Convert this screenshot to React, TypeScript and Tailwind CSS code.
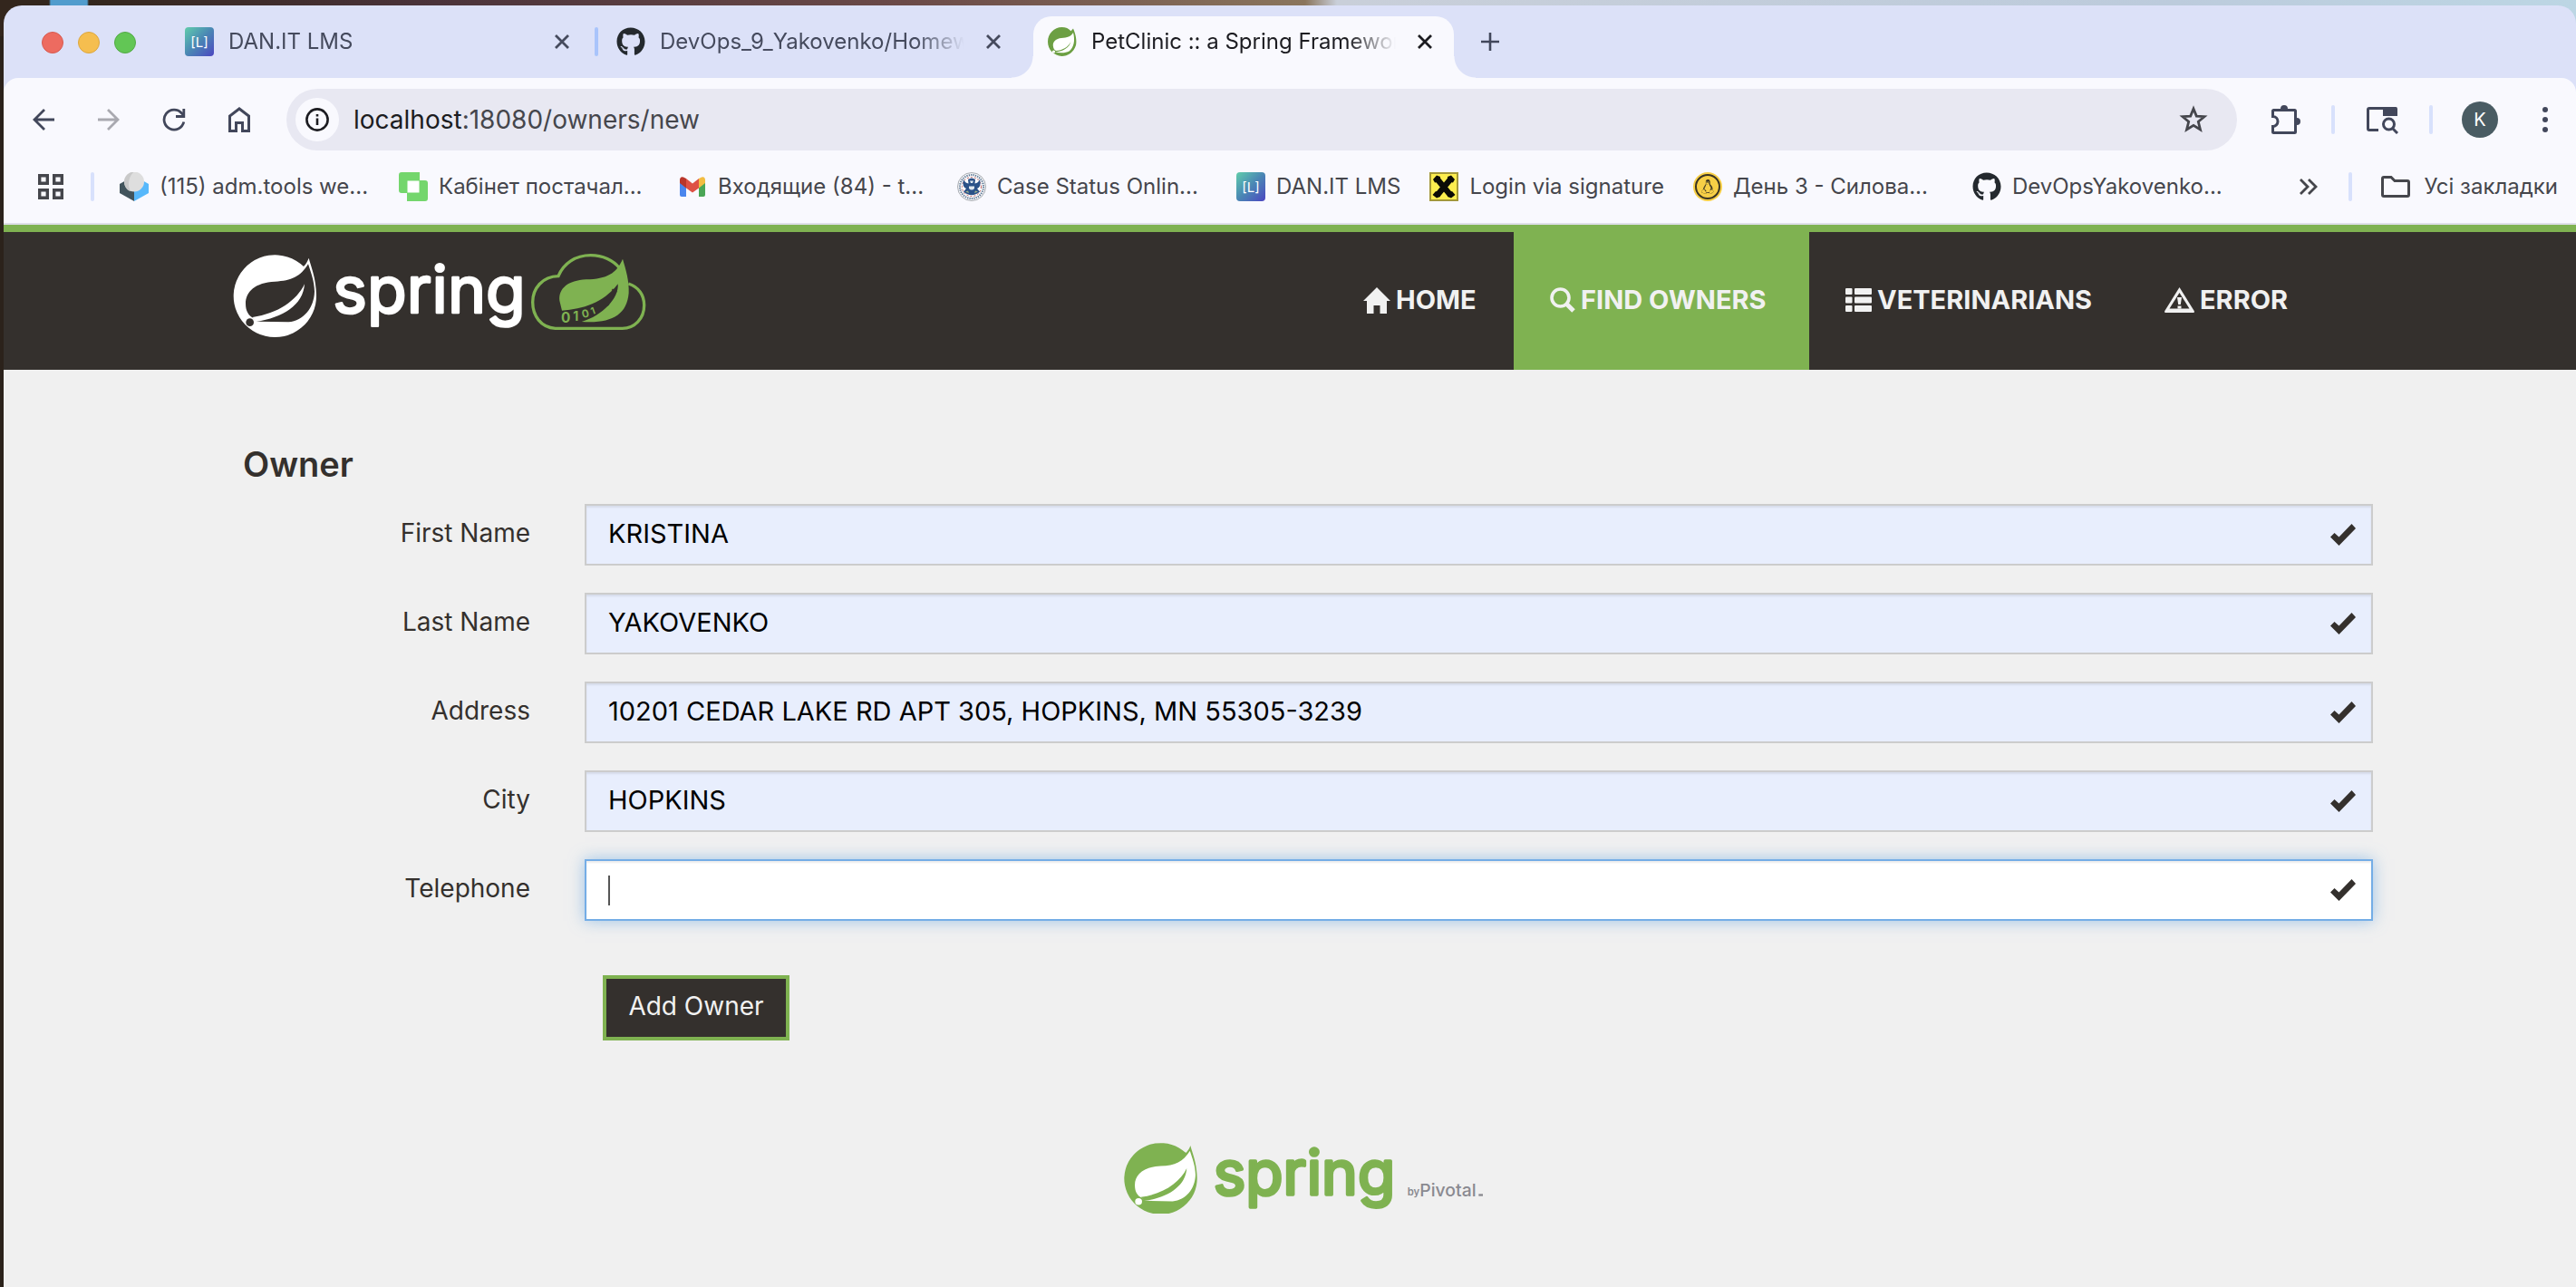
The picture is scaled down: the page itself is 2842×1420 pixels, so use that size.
import React from 'react';
import { FaGithub, FaLinux } from 'react-icons/fa';

/* ---------- browser icons ---------- */

function DanIcon() {
  return (
    <span className="flex size-8 shrink-0 items-center justify-center rounded-sm bg-linear-135 from-[#62cdaa] via-[#4a86b4] to-[#4c43c0] text-[15px] leading-none text-white">
      [L]
    </span>
  );
}

function SpringFavicon() {
  return (
    <svg viewBox="0 0 32 32" className="size-8 shrink-0" aria-hidden="true">
      <path
        d="M28 1.500C31 8 32 15 31 20C28.500 28 22 32 15.500 32C7 31.500 0 25 0 16C0 7 7 0 15.500 0C20 0 23 1.500 25.500 4.200Z"
        fill="#6c9f43"
      />
      <path
        d="M28 6C25.500 10.500 21.500 11.500 15 12C9 12.500 5.500 16 5.800 20.500C6 23.500 7.500 25.500 9 26C16 25.500 22 22.500 25.500 16C23.500 22.500 17.500 26.500 8 27.500C14 28.800 20 28.500 23.500 26.500C28.500 23 30.500 15 28 6Z"
        fill="#fff"
      />
      <circle cx="6.500" cy="27" r="1.600" fill="#fff" />
    </svg>
  );
}

function BoxIcon() {
  return (
    <svg viewBox="0 0 32 32" className="size-8 shrink-0" aria-hidden="true">
      <path d="M0 13L7 9L16 20V32L0 23Z" fill="#42545c" />
      <path d="M32 13L25 9L16 20V32L32 23Z" fill="#57b8fb" />
      <ellipse cx="16" cy="10.500" rx="11" ry="11" fill="#dedede" />
      <path d="M16 -0.500C9 0 5 5 5 11C5.500 17 9 20.500 12 21C8 14 10 4 16 -0.500Z" fill="#c9c9c9" />
    </svg>
  );
}

function CabinetIcon() {
  return (
    <svg viewBox="0 0 32 32" className="size-8 shrink-0" aria-hidden="true">
      <path
        d="M3 0H23V9H29Q32 9 32 12V29Q32 32 29 32H9V23H3Q0 23 0 20V3Q0 0 3 0Z"
        fill="#74d66c"
      />
      <rect x="9.500" y="9.500" width="13" height="13" fill="#fff" />
    </svg>
  );
}

function GmailIcon() {
  return (
    <svg viewBox="0 0 32 32" className="size-8 shrink-0" aria-hidden="true">
      <path d="M2 8L9 13V27H4Q2 27 2 25Z" fill="#4a86ee" />
      <path d="M30 8L23 13V27H28Q30 27 30 25Z" fill="#4ba656" />
      <path d="M23 7L26 5.500Q30 4.500 30 9V12L23 17.500Z" fill="#f3bd42" />
      <path d="M9 7L16 12.500L23 7V17.500L16 22.500L9 17.500Z" fill="#de5145" />
      <path d="M9 7L6 5.500Q2 4.500 2 9V12L9 17.500Z" fill="#b9362b" />
    </svg>
  );
}

function SealIcon() {
  return (
    <svg viewBox="0 0 32 32" className="size-8 shrink-0" aria-hidden="true">
      <circle cx="16" cy="16" r="15.500" fill="#f4f5f7" stroke="#a9adb3" />
      <circle cx="16" cy="16" r="13" fill="none" stroke="#54708f" strokeWidth="2" strokeDasharray="1.200 1.200" />
      <circle cx="16" cy="16" r="10.500" fill="#fff" stroke="#c25b5b" strokeDasharray="2 2" />
      <path
        d="M7 8Q9 12 12.500 12.500L12 8Q16 5 20 8L19.500 12.500Q23 12 25 8Q27 16 22 18L25 21.500Q16 29 7 21.500L10 18Q5 16 7 8Z"
        fill="#2b5288"
      />
      <path d="M14 9.500H18L17 12H15ZM13 15.500H19V18Q16 21 13 18Z" fill="#dfe7ee" />
      <path d="M9 21.500L12 20.500L13 23ZM23 21.500L20 20.500L19 23Z" fill="#9fb58b" />
    </svg>
  );
}

function CrossIcon() {
  return (
    <svg viewBox="0 0 32 32" className="size-8 shrink-0" aria-hidden="true">
      <rect x="1" y="1" width="30" height="30" fill="#fdee4f" stroke="#a3983a" strokeWidth="2" />
      <path d="M9 8L23 25M23 8L9 25" stroke="#0b0b06" strokeWidth="6.500" />
      <path
        d="M4 8L8 3.500L12 5V10L6 11.500ZM28 8L24 3.500L20 5V10L26 11.500ZM3.500 25L7 21L12 23V27L8 28.500ZM28.500 25L25 21L20 23V27L24 28.500Z"
        fill="#0b0b06"
      />
    </svg>
  );
}

function LinuxIcon() {
  return (
    <span className="flex size-8 shrink-0 items-center justify-center rounded-full bg-[#f7cf46] p-0.5">
      <span className="flex size-7 items-center justify-center rounded-full border-2 border-[#3a3423] text-[#3a3423]">
        <FaLinux className="size-4" />
      </span>
    </span>
  );
}

function CloseIcon() {
  return (
    <svg viewBox="0 0 16 16" className="size-4" fill="none" stroke="currentColor" strokeWidth="2.800" aria-hidden="true">
      <path d="M1 1L15 15M15 1L1 15" />
    </svg>
  );
}

function Divider() {
  return <span className="h-8 w-1 shrink-0 rounded-full bg-[#d8e1fc]" />;
}

function ToolButton({ label, children }: { label: string; children: React.ReactNode }) {
  return (
    <button
      type="button"
      aria-label={label}
      className="flex h-16 w-[72px] shrink-0 items-center justify-center text-[#42475b]"
    >
      {children}
    </button>
  );
}

/* ---------- tabs ---------- */

function Tab({ icon, title, active = false }: { icon: React.ReactNode; title: string; active?: boolean }) {
  return (
    <div
      className={
        active
          ? 'relative flex h-[68px] w-[464px] items-start rounded-t-[20px] bg-[#f9f9fe] pt-3 pr-6 pl-4 text-[#1c1c21] before:absolute before:bottom-0 before:-left-6 before:size-6 before:bg-[radial-gradient(circle_at_0_0,transparent_23px,#f9f9fe_24px)] after:absolute after:-right-6 after:bottom-0 after:size-6 after:bg-[radial-gradient(circle_at_100%_0,transparent_23px,#f9f9fe_24px)]'
          : 'flex h-[68px] w-[464px] items-start pt-3 pr-6 pl-4 text-[#454a5d]'
      }
    >
      {icon}
      <span className="ml-4 flex-1 overflow-hidden mask-[linear-gradient(to_right,black_84%,transparent)] text-2xl whitespace-nowrap">
        {title}
      </span>
      <button type="button" aria-label={'Close ' + title} className="ml-6 flex h-8 items-center">
        <CloseIcon />
      </button>
    </div>
  );
}

function TabStrip() {
  return (
    <div className="flex h-20 items-end">
      <div className="flex h-[68px] w-[184px] shrink-0 gap-4 pt-[17px] pl-[42px]">
        <span className="size-6 rounded-full border border-[#d75a50] bg-[#ed6b60]" />
        <span className="size-6 rounded-full border border-[#dca73f] bg-[#f5be4f]" />
        <span className="size-6 rounded-full border border-[#52aa45] bg-[#62c655]" />
      </div>
      <Tab icon={<DanIcon />} title="DAN.IT LMS" />
      <div className="flex h-[68px] w-3 justify-center pt-3">
        <span className="h-8 w-1 rounded-full bg-[#a9c4fb]" />
      </div>
      <Tab icon={<FaGithub className="size-8 shrink-0 text-[#24292e]" />} title="DevOps_9_Yakovenko/Homew" />
      <div className="w-3" />
      <Tab icon={<SpringFavicon />} title="PetClinic :: a Spring Framewor" active />
      <button type="button" aria-label="New tab" className="ml-[30px] flex h-[68px] items-start pt-[18px] text-[#42475b]">
        <svg viewBox="0 0 20 20" className="size-5" fill="none" stroke="currentColor" strokeWidth="2.600" aria-hidden="true">
          <path d="M10 0V20M0 10H20" />
        </svg>
      </button>
    </div>
  );
}

/* ---------- address bar ---------- */

function Toolbar() {
  return (
    <div className="flex items-center pt-3 pl-2">
      <ToolButton label="Back">
        <svg viewBox="0 0 24 24" className="size-6" fill="none" stroke="currentColor" strokeWidth="2.800" aria-hidden="true">
          <path d="M24 12H2M13 1L2 12L13 23" />
        </svg>
      </ToolButton>
      <ToolButton label="Forward">
        <svg viewBox="0 0 24 24" className="size-6 text-[#a9a9b0]" fill="none" stroke="currentColor" strokeWidth="2.800" aria-hidden="true">
          <path d="M0 12H22M11 1L22 12L11 23" />
        </svg>
      </ToolButton>
      <ToolButton label="Reload">
        <svg viewBox="0 0 26 26" className="size-[26px]" fill="none" stroke="currentColor" strokeWidth="2.800" aria-hidden="true">
          <path d="M23.800 15.500A11 11 0 1 1 21.500 6L23.500 8.500" />
          <path d="M23.800 1V9.500H15" />
        </svg>
      </ToolButton>
      <ToolButton label="Home">
        <svg viewBox="0 0 24 28" className="h-7 w-6" fill="none" stroke="currentColor" strokeWidth="3" aria-hidden="true">
          <path d="M1.500 26.500V10L12 2L22.500 10V26.500H15.500V17.500H8.500V26.500Z" />
        </svg>
      </ToolButton>
      <div className="ml-4 flex h-[68px] flex-1 items-center rounded-full bg-[#e8e8f2] pr-8 pl-2.5">
        <button type="button" aria-label="Site information" className="flex size-12 items-center justify-center rounded-full bg-[#f9f9fe] text-[#1c1c21]">
          <svg viewBox="0 0 26 26" className="size-[26px]" fill="none" stroke="currentColor" strokeWidth="2.600" aria-hidden="true">
            <circle cx="13" cy="13" r="11.600" />
            <path d="M13 11.500V19M13 7V9.500" />
          </svg>
        </button>
        <span className="ml-4 flex-1 text-[28px] leading-10 text-[#45464c]">
          <span className="text-[#1c1c21]">localhost</span>:18080/owners/new
        </span>
        <button type="button" aria-label="Bookmark this page" className="text-[#45464c]">
          <svg viewBox="0 0 32 32" className="size-8" fill="none" stroke="currentColor" strokeWidth="2.800" aria-hidden="true">
            <path d="M16 4L19.300 12.100L28 12.700L21.300 18.300L23.500 27L16 22.300L8.500 27L10.700 18.300L4 12.700L12.700 12.100Z" />
          </svg>
        </button>
      </div>
      <div className="-mr-0.5 ml-[18px] flex items-center">
        <ToolButton label="Extensions">
          <svg viewBox="0 0 32 32" className="size-8" aria-hidden="true">
            <path
              d="M3.500 5.500H25.500Q26.500 5.500 26.500 6.500V29.500Q26.500 30.500 25.500 30.500H2.500Q1.500 30.500 1.500 29.500V23.500A5.500 5.500 0 0 0 1.500 12.500V6.500Q1.500 5.500 2.500 5.500Z"
              fill="none"
              stroke="currentColor"
              strokeWidth="3"
            />
            <path d="M10 4A4 4 0 0 1 18 4ZM28 14A4 4 0 0 1 28 22Z" fill="currentColor" />
          </svg>
        </ToolButton>
        <div className="mr-4 ml-3.5 flex"><Divider /></div>
        <ToolButton label="Search this tab">
          <svg viewBox="0 0 36 32" className="h-8 w-9" aria-hidden="true">
            <path d="M14 27.500H4Q2.500 27.500 2.500 26V5Q2.500 3.500 4 3.500H32V10" fill="none" stroke="currentColor" strokeWidth="3" />
            <path d="M19 2H33Q35 2 35 4V12H19Z" fill="currentColor" />
            <circle cx="25.500" cy="21" r="6" fill="#f9f9fe" stroke="currentColor" strokeWidth="3" />
            <path d="M29.500 25.500L35 31" stroke="currentColor" strokeWidth="3" />
          </svg>
        </ToolButton>
        <div className="mx-4 flex"><Divider /></div>
        <ToolButton label="Profile">
          <span className="flex size-10 items-center justify-center rounded-full bg-[#4a5c63] text-[20px] leading-none text-white">K</span>
        </ToolButton>
        <ToolButton label="Menu">
          <svg viewBox="0 0 6 28" className="h-7 w-1.5" fill="currentColor" aria-hidden="true">
            <circle cx="3" cy="3" r="3" />
            <circle cx="3" cy="14" r="3" />
            <circle cx="3" cy="25" r="3" />
          </svg>
        </ToolButton>
      </div>
    </div>
  );
}

/* ---------- bookmarks ---------- */

const bookmarks: { title: string; icon: React.ReactNode; wide: boolean }[] = [
  { title: '(115) adm.tools we...', icon: <BoxIcon />, wide: true },
  { title: 'Кабінет постачал...', icon: <CabinetIcon />, wide: true },
  { title: 'Входящие (84) - t...', icon: <GmailIcon />, wide: true },
  { title: 'Case Status Onlin...', icon: <SealIcon />, wide: true },
  { title: 'DAN.IT LMS', icon: <DanIcon />, wide: false },
  { title: 'Login via signature', icon: <CrossIcon />, wide: false },
  { title: 'День 3 - Силова...', icon: <LinuxIcon />, wide: true },
  { title: 'DevOpsYakovenko...', icon: <FaGithub className="size-8 shrink-0 text-[#24292e]" />, wide: true },
];

function BookmarksBar() {
  return (
    <div className="flex h-20 items-center pr-5 pl-[38px] text-2xl whitespace-nowrap text-[#45464c]">
      <button type="button" aria-label="Apps">
        <svg viewBox="0 0 28 28" className="size-7" fill="none" stroke="currentColor" strokeWidth="3.400" aria-hidden="true">
          <path d="M1.700 1.700H10.300V10.300H1.700ZM17.700 1.700H26.300V10.300H17.700ZM1.700 17.700H10.300V26.300H1.700ZM17.700 17.700H26.300V26.300H17.700Z" />
        </svg>
      </button>
      <div className="mr-7 ml-[30px] flex"><Divider /></div>
      <nav aria-label="Bookmarks" className="flex flex-1">
        {bookmarks.map((b) => (
          <a
            key={b.title}
            href="#"
            className={b.wide ? 'flex w-[308px] shrink-0 items-center gap-3' : 'flex shrink-0 items-center gap-3 pr-8'}
          >
            {b.icon}
            {b.title}
          </a>
        ))}
      </nav>
      <button type="button" aria-label="More bookmarks">
        <svg viewBox="0 0 20 18" className="h-[18px] w-5" fill="none" stroke="currentColor" strokeWidth="2.800" aria-hidden="true">
          <path d="M1 1L9 9L1 17M10 1L18 9L10 17" />
        </svg>
      </button>
      <div className="mr-8 ml-[34px] flex"><Divider /></div>
      <button type="button" className="flex items-center gap-4">
        <svg viewBox="0 0 32 32" className="size-8" fill="none" stroke="currentColor" strokeWidth="3" aria-hidden="true">
          <path d="M3 5.500H11L15 9.500H29Q30.500 9.500 30.500 11V25Q30.500 26.500 29 26.500H3Q1.500 26.500 1.500 25V7Q1.500 5.500 3 5.500Z" />
        </svg>
        Усі закладки
      </button>
    </div>
  );
}

/* ---------- page logos ---------- */

function SpringMark({ color, leaf }: { color: string; leaf: string }) {
  return (
    <g>
      <path
        d="M302 134C310 165 326 200 327 256A137 136 0 1 1 285 162C293 153 298 145 302 134Z"
        fill={color}
      />
      <path
        d="M300 154C275 195 245 210 190 212C125 215 93 245 93 285C93 310 103 325 118 332L130 344L235 346C285 340 319 300 321 245C320 210 310 185 300 154Z"
        fill={leaf}
      />
      <path d="M116 330C200 318 262 275 288 220C284 290 215 332 128 345Z" fill={color} />
      <circle cx="107" cy="347" r="13" fill={leaf} />
    </g>
  );
}

function HeaderLogo() {
  return (
    <svg viewBox="54 120 1365 273" className="h-[91px] w-[455px] overflow-visible" role="img" aria-label="Spring">
      <SpringMark color="#ffffff" leaf="#34302d" />
      <text
        x="382"
        y="316"
        fontFamily="Inter, sans-serif"
        fontSize="214"
        fontWeight="400"
        fill="#fff"
        stroke="#fff"
        strokeWidth="8"
        strokeLinejoin="round"
      >
        spring
      </text>
      <path
        d="M1360 219C1395 230 1412 258 1412 290C1412 335 1380 367 1340 367H1118C1070 364 1043 325 1043 280C1043 235 1075 195 1128 194C1145 152 1185 125 1235 125C1275 125 1310 142 1330 167"
        fill="none"
        stroke="#7fb251"
        strokeWidth="10"
      />
      <path
        d="M1341 137C1320 185 1290 203 1220 205C1160 208 1128 235 1132 275L1140 308C1210 302 1275 285 1325 220C1330 265 1275 325 1205 345C1300 352 1355 325 1361 250C1363 210 1352 175 1341 137Z"
        fill="#7fb251"
      />
      <g fontFamily="Inter, sans-serif" fontWeight="700" fill="#7fb251">
        <text x="1137" y="348" fontSize="46">0</text>
        <text x="1177" y="341" fontSize="42">1</text>
        <text x="1208" y="333" fontSize="36" transform="rotate(-12 1208 333)">0</text>
        <text x="1240" y="322" fontSize="32" transform="rotate(-20 1240 322)">1</text>
      </g>
      <g fontFamily="Inter, sans-serif" fontWeight="700" fill="#34302d">
        <text x="1262" y="312" fontSize="32" transform="rotate(-20 1262 312)">1</text>
        <text x="1284" y="296" fontSize="28" transform="rotate(-30 1284 296)">0</text>
        <text x="1302" y="276" fontSize="26" transform="rotate(-45 1302 276)">0</text>
        <text x="1318" y="252" fontSize="24" transform="rotate(-60 1318 252)">1</text>
      </g>
    </svg>
  );
}

function FooterLogo() {
  return (
    <svg viewBox="120 120 1188 240" className="h-20 w-[396px] overflow-visible" role="img" aria-label="Spring by Pivotal">
      <svg x="120" y="119" width="243" height="238" viewBox="52 119 276 274" preserveAspectRatio="none">
        <SpringMark color="#7fb251" leaf="#ffffff" />
      </svg>
      <text
        x="416"
        y="295"
        fontFamily="Inter, sans-serif"
        fontSize="202"
        fontWeight="400"
        fill="#7fb251"
        stroke="#7fb251"
        strokeWidth="11"
        strokeLinejoin="round"
      >
        spring
      </text>
      <g fontFamily="Inter, sans-serif" fill="#8a8a90">
        <text x="1058" y="298" fontSize="34" fontWeight="600">by</text>
        <text x="1099" y="300" fontSize="58" fontWeight="500">Pivotal</text>
      </g>
      <rect x="1294" y="292" width="14" height="7" fill="#8a8a90" />
    </svg>
  );
}

/* ---------- navigation ---------- */

function HomeGlyph() {
  return (
    <svg viewBox="0 0 30 29" className="h-[29px] w-[30px]" fill="currentColor" aria-hidden="true">
      <path d="M15 0L30 15H26V29H18.500V20H11.500V29H4V15H0Z" />
    </svg>
  );
}

function SearchGlyph() {
  return (
    <svg viewBox="0 0 28 28" className="size-7" fill="none" stroke="currentColor" aria-hidden="true">
      <circle cx="11.500" cy="11.500" r="9.500" strokeWidth="3.600" />
      <path d="M18.500 18.500L26 26" strokeWidth="5" />
    </svg>
  );
}

function ListGlyph() {
  return (
    <svg viewBox="0 0 29 26" className="h-[26px] w-[29px]" fill="currentColor" aria-hidden="true">
      <rect x="0" y="0" width="7.500" height="7" rx="1" />
      <rect x="10" y="0" width="19" height="7" rx="1" />
      <rect x="0" y="9.500" width="7.500" height="7" rx="1" />
      <rect x="10" y="9.500" width="19" height="7" rx="1" />
      <rect x="0" y="19" width="7.500" height="7" rx="1" />
      <rect x="10" y="19" width="19" height="7" rx="1" />
    </svg>
  );
}

function WarningGlyph() {
  return (
    <svg viewBox="0 0 33 28" className="h-7 w-[33px]" aria-hidden="true">
      <path d="M16.500 0L33 26.500Q33 28 32 28H1Q0 28 0 26.500Z" fill="currentColor" />
      <path d="M16.500 6L27.500 23.500H5.500Z" fill="#34302d" />
      <path d="M14 11H19L17.800 19H15.200ZM14.500 20.500H18.500V23.500H14.500Z" fill="currentColor" />
    </svg>
  );
}

const navItems = [
  { label: 'HOME', icon: <HomeGlyph />, box: 'w-[206px]' },
  { label: 'FIND OWNERS', icon: <SearchGlyph />, box: 'w-[326px] bg-[#7fb251]' },
  { label: 'VETERINARIANS', icon: <ListGlyph />, box: 'w-[352px]' },
  { label: 'ERROR', icon: <WarningGlyph />, box: 'w-[220px]' },
];

function SiteHeader() {
  return (
    <header className="flex items-stretch justify-between border-t-8 border-[#7fb251] bg-[#34302d] pr-[274px] pl-[254px]">
      <a href="#" className="block pt-6">
        <HeaderLogo />
      </a>
      <nav aria-label="Main" className="flex h-[152px]">
        {navItems.map((n) => (
          <a
            key={n.label}
            href="#"
            className={'flex items-center gap-1.5 pb-0.5 pl-10 text-[29px] leading-10 font-bold text-[#f1f1f1] ' + n.box}
          >
            {n.icon}
            {n.label}
          </a>
        ))}
      </nav>
    </header>
  );
}

/* ---------- owner form ---------- */

const fields = [
  { id: 'firstName', label: 'First Name', value: 'KRISTINA' },
  { id: 'lastName', label: 'Last Name', value: 'YAKOVENKO' },
  { id: 'address', label: 'Address', value: '10201 CEDAR LAKE RD APT 305, HOPKINS, MN 55305-3239' },
  { id: 'city', label: 'City', value: 'HOPKINS' },
  { id: 'telephone', label: 'Telephone', value: '' },
];

function OwnerForm() {
  return (
    <form className="pt-20 pr-[224px] pl-[264px] text-[28px] leading-10 text-[#34302d]">
      <h2 className="text-[38px] leading-12 font-semibold">Owner</h2>
      <div className="mt-5 flex flex-col gap-[30px]">
        {fields.map((f) => (
          <div key={f.id} className="flex gap-[60px]">
            <label htmlFor={f.id} className="w-[317px] shrink-0 pt-3 text-right">
              {f.label}
            </label>
            <div className="relative flex-1">
              <input
                id={f.id}
                type="text"
                defaultValue={f.value}
                className={
                  f.value
                    ? 'block h-[68px] w-full border-2 border-[#cccccc] bg-[#e8eefd] px-6 pb-1 text-[29px] text-black shadow-[inset_0_2px_2px_rgba(0,0,0,0.075)] outline-none'
                    : 'block h-[68px] w-full border-2 border-[#74ade6] bg-white px-6 pb-1 text-[29px] text-black shadow-[inset_0_2px_2px_rgba(0,0,0,0.075),0_0_16px_rgba(102,165,225,0.6)] outline-none'
                }
              />
              {!f.value && <span className="absolute top-[18px] left-[26px] h-[33px] w-0.5 bg-[#555555]" />}
              <svg viewBox="0 0 28 24" className="absolute top-[22px] right-[19px] h-6 w-7" fill="#34302d" aria-hidden="true">
                <path d="M0 14.500L4.500 10L9.500 14.500L23.500 0L28 5L9.500 24Z" />
              </svg>
            </div>
          </div>
        ))}
      </div>
      <button
        type="submit"
        className="mt-[60px] ml-[397px] flex h-[72px] w-[206px] items-center justify-center border-4 border-[#7fb251] bg-[#34302d] pb-1 text-[#f1f1f1]"
      >
        Add Owner
      </button>
    </form>
  );
}

export default function App() {
  return (
    <div className="flex min-h-screen flex-col bg-[#2b221b] bg-[linear-gradient(90deg,#33261d_0,#33261d_54px,#519ccd_56px,#519ccd_96px,#33261d_98px,#4b333a_480px,#6b4a48_1000px,#8a755c_1440px,#c9cfd9_1475px,#bccbdc_2400px,#bcd6e4_2842px)] bg-size-[100%_40px] bg-no-repeat pt-1.5 pl-1 font-['Inter','Noto_Sans',sans-serif]">
      <div className="flex flex-1 flex-col overflow-hidden rounded-t-[20px] bg-[#dce1f8]">
        <TabStrip />
        <div className="rounded-t-2xl border-b-2 border-[#dfdfe8] bg-[#f9f9fe]">
          <Toolbar />
          <BookmarksBar />
        </div>
        <main className="flex-1 bg-[#f0f0f0]">
          <SiteHeader />
          <OwnerForm />
          <footer className="flex justify-center pt-28 pb-20 pl-[30px]">
            <FooterLogo />
          </footer>
        </main>
      </div>
    </div>
  );
}
